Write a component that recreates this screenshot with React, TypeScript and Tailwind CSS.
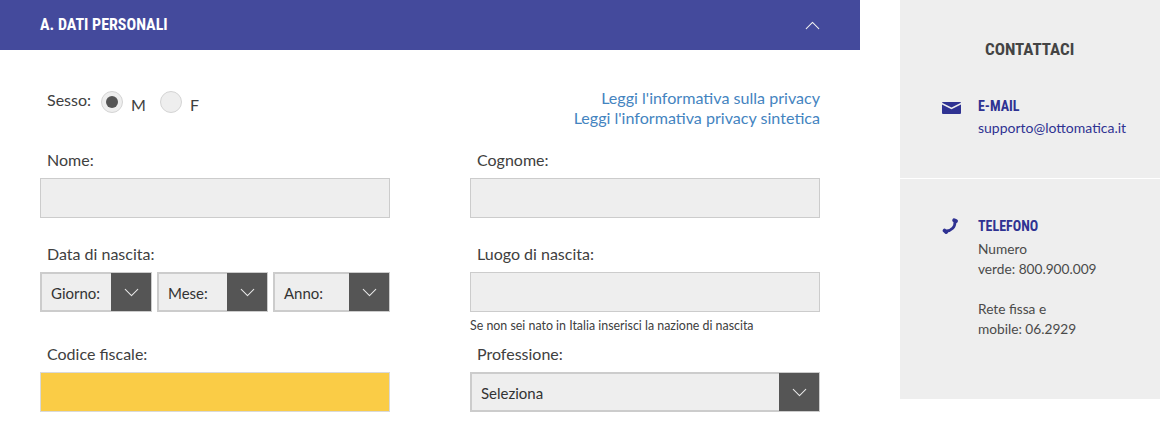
import { ChevronDown, ChevronUp } from "lucide-react";
import type { ReactNode } from "react";

const cond = "font-['Roboto_Condensed','Roboto',sans-serif]";

function Label({ children }: { children: ReactNode }) {
  return <div className="h-6 pl-[7px] mb-[5px] text-[16px] leading-[22px] text-[#404040]">{children}</div>;
}

function Input({ yellow }: { yellow?: boolean }) {
  return (
    <div className={`h-10 border ${yellow ? "bg-[#facc46] border-[#d9d9d9]" : "bg-[#eeeeee] border-[#cccccc]"}`} />
  );
}

function Select({ label, className }: { label: string; className: string }) {
  return (
    <div className={`flex h-10 items-stretch border border-[#cccccc] bg-[#eeeeee] ${className}`}>
      <span className="flex-1 border-y border-l border-[#cccccc] pl-[9px] text-[15px] leading-[38px] text-[#333333]">{label}</span>
      <span className="flex w-10 items-center justify-center bg-[#555555] text-[#e8e8e8]">
        <ChevronDown size={25} strokeWidth={1} />
      </span>
    </div>
  );
}

function Radio({ checked, label }: { checked?: boolean; label: string }) {
  return (
    <div className="flex items-start">
      <span className="flex h-[22px] w-[22px] items-center justify-center rounded-full border border-[#d4d4d4] bg-[#eeeeee]">
        {checked && <span className="h-3 w-3 rounded-full bg-[#555555]" />}
      </span>
      <span className="ml-2 mt-[2px] text-[16px] leading-6 text-[#404040]">{label}</span>
    </div>
  );
}

export default function App() {
  return (
    <div className="flex h-[421px] w-[1163px] overflow-hidden bg-white font-['Lato',sans-serif]">
      <div className="w-[860px]">
        <div className="flex h-[50px] items-center justify-between bg-[#444a9c] pl-10 pr-[35px] text-[#f0f0f0]">
          <span className={`${cond} text-[16px] font-bold text-white`}>A. DATI PERSONALI</span>
          <ChevronUp size={25} strokeWidth={1} />
        </div>

        <div className="px-10">
          <div className="flex h-[99px] justify-between pt-[41px]">
            <div className="flex items-start pl-[7px]">
              <span className="mr-[10px] text-[16px] leading-[18px] text-[#404040]">Sesso:</span>
              <div className="flex gap-[14px]">
                <Radio checked label="M" />
                <Radio label="F" />
              </div>
            </div>
            <div className="-mt-[3px] text-right text-[16.1px] leading-5 text-[#4484bf]">
              <div>Leggi l'informativa sulla privacy</div>
              <div>Leggi l'informativa privacy sintetica</div>
            </div>
          </div>

          <div className="grid grid-cols-[350px_350px] gap-x-20">
            <div>
              <Label>Nome:</Label>
              <Input />
            </div>
            <div>
              <Label>Cognome:</Label>
              <Input />
            </div>
            <div className="mt-[25px]">
              <Label>Data di nascita:</Label>
              <div className="flex gap-[5px]">
                <Select label="Giorno:" className="w-[112px]" />
                <Select label="Mese:" className="w-[111px]" />
                <Select label="Anno:" className="w-[117px]" />
              </div>
            </div>
            <div className="mt-[25px]">
              <Label>Luogo di nascita:</Label>
              <Input />
              <div className="mt-[6px] h-4 text-[12.4px] leading-4 text-[#404040]">
                Se non sei nato in Italia inserisci la nazione di nascita
              </div>
            </div>
            <div className="mt-[9px]">
              <Label>Codice fiscale:</Label>
              <Input yellow />
            </div>
            <div className="mt-[9px]">
              <Label>Professione:</Label>
              <Select label="Seleziona" className="w-[350px]" />
            </div>
          </div>
        </div>
      </div>

      <div className="ml-10 h-[399px] w-[260px] bg-[#eeeeee]">
        <div className="h-[179px] border-b border-white">
          <div className={`${cond} pt-[39px] pl-[85px] text-[17px] font-bold leading-5 text-[#444444]`}>CONTATTACI</div>
          <div className="mt-[37px] flex pl-[42px]">
            <svg className="mt-[6px] h-3 w-[19px] shrink-0" viewBox="0 0 19 12" fill="#2f3292">
              <path d="M1 0h17a1 1 0 0 1 1 .8L9.500 5.400 0 .8A1 1 0 0 1 1 0Z" />
              <path d="M0 2.600 9.500 7.200 19 2.600V11a1 1 0 0 1-1 1H1a1 1 0 0 1-1-1Z" />
            </svg>
            <div className="ml-[17px]">
              <div className={`${cond} text-[14px] font-bold leading-5 text-[#2f3292]`}>E-MAIL</div>
              <div className="mt-[2px] text-[14px] leading-5 text-[#2f3292]">supporto@lottomatica.it</div>
            </div>
          </div>
        </div>
        <div className="flex pl-[42px] pt-[37px]">
          <svg className="mt-[2px] h-4 w-4 shrink-0" viewBox="0 0 16 16" fill="none" stroke="#2f3292" strokeLinecap="round">
            <path d="M13 3.500C13.200 9 9.500 12.800 3.800 13.200" strokeWidth="2.800" />
            <path d="M12.200 2.300 14 3" strokeWidth="3.800" />
            <path d="M2.600 12.600 4.200 14" strokeWidth="3.800" />
          </svg>
          <div className="ml-5">
            <div className={`${cond} text-[14px] font-bold leading-5 text-[#2f3292]`}>TELEFONO</div>
            <div className="mt-[3px] text-[13.7px] leading-5 text-[#4a4a4a]">
              <div>Numero</div>
              <div>verde: 800.900.009</div>
              <div className="mt-5">Rete fissa e</div>
              <div>mobile: 06.2929</div>
            </div>
          </div>
        </div>
      </div>
    </div>
  );
}
